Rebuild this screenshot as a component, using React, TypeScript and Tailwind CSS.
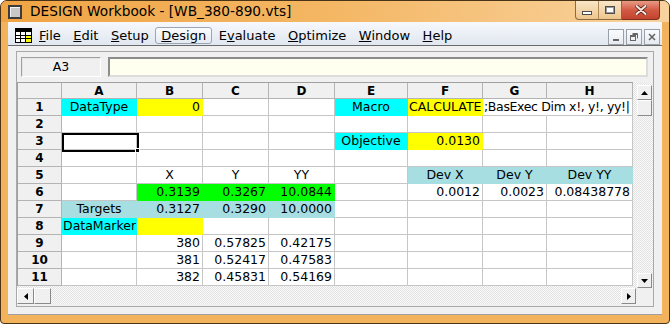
import React from "react";

type Tone = "cyan" | "yel" | "grn" | "teal";
type Cell = { t?: string; bg?: Tone; a?: "l" | "c" | "r"; open?: boolean };

const TONE: Record<Tone, string> = {
  cyan: "bg-[#00ffff] border-[#00ffff]",
  yel: "bg-[#ffff00] border-[#ffff00]",
  grn: "bg-[#00ff00] border-[#00ff00]",
  teal: "bg-[#a6dee2] border-[#a6dee2]",
};

const ALIGN = { l: "justify-start pl-[1px]", c: "justify-center", r: "justify-end pr-[2px]" };

const COLS = ["A", "B", "C", "D", "E", "F", "G", "H"];

const e: Cell = {};
const rows: Cell[][] = [
  [
    { t: "DataType", bg: "cyan", a: "c" },
    { t: "0", bg: "yel", a: "r" },
    e,
    e,
    { t: "Macro", bg: "cyan", a: "c" },
    { t: "CALCULATE", bg: "yel", a: "l" },
    { t: ";BasExec Dim x!, y!, yy!|", a: "l", open: true },
    e,
  ],
  [e, e, e, e, e, e, e, e],
  [e, e, e, e, { t: "Objective", bg: "cyan", a: "c" }, { t: "0.0130", bg: "yel", a: "r" }, e, e],
  [e, e, e, e, e, e, e, e],
  [
    e,
    { t: "X", a: "c" },
    { t: "Y", a: "c" },
    { t: "YY", a: "c" },
    e,
    { t: "Dev X", bg: "teal", a: "c" },
    { t: "Dev Y", bg: "teal", a: "c" },
    { t: "Dev YY", bg: "teal", a: "c" },
  ],
  [
    e,
    { t: "0.3139", bg: "grn", a: "r" },
    { t: "0.3267", bg: "grn", a: "r" },
    { t: "10.0844", bg: "grn", a: "r" },
    e,
    { t: "0.0012", a: "r" },
    { t: "0.0023", a: "r" },
    { t: "0.08438778", a: "r" },
  ],
  [
    { t: "Targets", bg: "teal", a: "c" },
    { t: "0.3127", bg: "teal", a: "r" },
    { t: "0.3290", bg: "teal", a: "r" },
    { t: "10.0000", bg: "teal", a: "r" },
    e,
    e,
    e,
    e,
  ],
  [{ t: "DataMarker", bg: "cyan", a: "l" }, { bg: "yel" }, e, e, e, e, e, e],
  [e, { t: "380", a: "r" }, { t: "0.57825", a: "r" }, { t: "0.42175", a: "r" }, e, e, e, e],
  [e, { t: "381", a: "r" }, { t: "0.52417", a: "r" }, { t: "0.47583", a: "r" }, e, e, e, e],
  [e, { t: "382", a: "r" }, { t: "0.45831", a: "r" }, { t: "0.54169", a: "r" }, e, e, e, e],
];

const btn3d = "bg-[#f0f0f0] border border-t-white border-l-white border-b-[#8a8a8a] border-r-[#8a8a8a]";
const hatch =
  "bg-[image:repeating-conic-gradient(#e2e2e2_0%_25%,#fafafa_0%_50%)] bg-[length:2px_2px]";

const Tri = ({ dir }: { dir: "up" | "down" | "left" | "right" }) => {
  const pts = {
    up: "0,4 7,4 3.5,0",
    down: "0,0 7,0 3.5,4",
    left: "4,0 4,7 0,3.5",
    right: "0,0 0,7 4,3.5",
  }[dir];
  const horiz = dir === "up" || dir === "down";
  return (
    <svg width={horiz ? 7 : 4} height={horiz ? 4 : 7} viewBox={horiz ? "0 0 7 4" : "0 0 4 7"}>
      <polygon points={pts} fill="#000" />
    </svg>
  );
};

const SheetIcon = () => (
  <svg width="17" height="15" viewBox="0 0 17 15">
    <rect x="0.5" y="0.5" width="16" height="14" fill="#fff" stroke="#000" />
    <rect x="1" y="1" width="15" height="3" fill="#000" />
    <rect x="11" y="7" width="5" height="7" fill="#ffff00" />
    <path d="M1 7.5H16M1 10.5H16M5.5 4V14M10.5 4V14" stroke="#000" />
  </svg>
);

export default function App() {
  return (
    <div className="w-[670px] h-[324px] overflow-hidden flex flex-col bg-[#f3b25c] border border-[#4a3418] rounded-t-[7px] rounded-b-[4px] font-['DejaVu_Sans',Verdana,sans-serif] text-black">
      {/* title bar */}
      <div className="h-[21px] flex bg-gradient-to-r from-[#f0a444] via-[#f4b764] to-[#f8d39e]">
        <div className="flex items-center pl-[7px] gap-[8px]">
          <div className="w-[14px] h-[14px] border-2 border-[#3c3c3c] bg-[#c8c8c8] shadow-[inset_1px_1px_0_#f4f4f4]" />
          <span className="text-[13.7px] leading-none pt-[1px]">DESIGN Workbook - [WB_380-890.vts]</span>
        </div>
        <div className="ml-auto mr-[9px] flex h-[19px]">
          <div className="flex w-[47px] rounded-bl-[4px] border border-t-0 border-[#8b6a3e] bg-gradient-to-b from-[#f9e6c8] to-[#eec58c] overflow-hidden">
            <div className="w-[23px] flex items-center justify-center border-r border-[#b08a58]">
              <div className="w-[10px] h-[4px] border border-[#4c4c4c] bg-white mt-[5px]" />
            </div>
            <div className="flex-1 flex items-center justify-center">
              <div className="w-[10px] h-[8px] border border-[#4c4c4c] bg-white shadow-[inset_0_0_0_1px_#9a9a9a]" />
            </div>
          </div>
          <div className="w-[38px] rounded-br-[4px] border border-t-0 border-l-0 border-[#7a3020] bg-gradient-to-b from-[#e99a86] via-[#d35a44] to-[#c2432e] flex items-center justify-center">
            <svg width="12" height="10" viewBox="0 0 12 10">
              <path d="M1.5 1 L10.5 9 M10.5 1 L1.5 9" stroke="#5a2014" strokeWidth="3.6" strokeLinecap="round" />
              <path d="M1.5 1 L10.5 9 M10.5 1 L1.5 9" stroke="#f4e6e2" strokeWidth="2" strokeLinecap="round" />
            </svg>
          </div>
        </div>
      </div>

      <div className="flex-1 flex flex-col px-[7px] pb-[8px]">
        {/* menu bar */}
        <div className="h-[24px] flex items-center pt-[4px] pl-[7px] pr-[2px] bg-gradient-to-b from-[#f6f8fc] to-[#e1e7f0] border-b border-[#6a6a6a] text-[13px]">
          <SheetIcon />
          <div className="flex gap-[2.5px] ml-[2px]">
            {[
              ["F", "ile"],
              ["E", "dit"],
              ["S", "etup"],
              ["D", "esign"],
              ["E", "v", "aluate"],
              ["O", "ptimize"],
              ["W", "indow"],
              ["H", "elp"],
            ].map((p, i) => (
              <div
                key={i}
                className={`h-[17px] px-[5px] flex items-center leading-none ${
                  i === 3
                    ? "border border-[#9aa6b8] rounded-[3px] bg-gradient-to-b from-[#fafbfd] to-[#e6ebf2] -mx-[1px]"
                    : ""
                }`}
              >
                {p.length === 3 ? (
                  <span>
                    {p[0]}
                    <u>{p[1]}</u>
                    {p[2]}
                  </span>
                ) : (
                  <span>
                    <u>{p[0]}</u>
                    {p[1]}
                  </span>
                )}
              </div>
            ))}
          </div>
          <div className="ml-auto self-end flex gap-[2px]">
            {["min", "max", "close"].map((k) => (
              <div
                key={k}
                className="w-[16px] h-[16px] border border-[#9aa0aa] bg-gradient-to-b from-[#fbfcfe] to-[#e6eaf0] flex items-center justify-center"
              >
                {k === "min" && <div className="w-[6px] h-[2px] bg-[#666] mt-[6px]" />}
                {k === "max" && (
                  <svg width="8" height="8" viewBox="0 0 8 8">
                    <path d="M2.5 0.5H7.5V5.5M2.5 1.5H7.5" stroke="#666" fill="none" />
                    <rect x="0.5" y="2.5" width="5" height="5" fill="none" stroke="#666" />
                    <path d="M0.5 3.5H5.5" stroke="#666" />
                  </svg>
                )}
                {k === "close" && (
                  <svg width="8" height="8" viewBox="0 0 8 8">
                    <path d="M1 1L7 7M7 1L1 7" stroke="#666" strokeWidth="1.6" />
                  </svg>
                )}
              </div>
            ))}
          </div>
        </div>

        {/* MDI child */}
        <div className="flex-1 flex flex-col bg-[#f0f0f0] pt-[5px] pb-[4px] px-[8px] border-b border-[#a0a0a0]">
          <div className="flex flex-col border border-[#a8a8a8] pt-[5px] pb-[2px] bg-[#f0f0f0]">
            {/* formula bar */}
            <div className="h-[20px] flex gap-[7px] pl-[4px] pr-[5px]">
              <div className="w-[80px] border border-t-[#a0a0a0] border-l-[#a0a0a0] border-b-white border-r-white shadow-[inset_1px_1px_0_#e4e4e4] flex items-center justify-center text-[12.5px]">
                A3
              </div>
              <div className="flex-1 bg-[#fffff0] border-2 border-t-[#8c8c8c] border-l-[#8c8c8c] border-b-[#dcdcdc] border-r-[#dcdcdc]" />
            </div>

            {/* sheet */}
            <div className="mt-[5px] grid grid-cols-[620px_16px] grid-rows-[206px_16px]">
              <div className={`${hatch}`}>
                <div className="relative w-[616px] h-[204px] overflow-hidden bg-white border-t border-l border-[#a0a0a0] grid grid-cols-[44px_75px_66px_66px_66px_73px_75px_64px_86px] grid-rows-[16px_repeat(11,17px)] text-[12.5px] leading-[16px]">
                  <div className="bg-[#f0f0f0] border-r border-b border-[#b4b4b4]" />
                  {COLS.map((c) => (
                    <div
                      key={c}
                      className="bg-[#f0f0f0] border-r border-b border-[#b4b4b4] flex items-center justify-center font-bold text-[12px]"
                    >
                      {c}
                    </div>
                  ))}
                  {rows.map((r, ri) => (
                    <React.Fragment key={ri}>
                      <div className="bg-[#f0f0f0] border-r border-b border-[#b4b4b4] flex items-center justify-center font-bold text-[12px]">
                        {ri + 1}
                      </div>
                      {r.map((c, ci) => (
                        <div
                          key={ci}
                          className={`border-r border-b flex items-center whitespace-nowrap ${
                            c.bg
                              ? TONE[c.bg]
                              : c.open
                              ? "border-b-[#c6c6c6] border-r-transparent"
                              : "border-[#c6c6c6]"
                          } ${c.open ? "overflow-visible tracking-[-0.35px]" : "overflow-hidden"} ${ALIGN[c.a ?? "l"]}`}
                        >
                          {c.t}
                        </div>
                      ))}
                    </React.Fragment>
                  ))}
                  {/* current cell A3 */}
                  <div className="absolute left-[44px] top-[50px] w-[77px] h-[19px] border-2 border-black" />
                  <div className="absolute left-[117px] top-[65px] w-[5px] h-[5px] bg-black border border-white" />
                </div>
              </div>

              {/* vertical scrollbar */}
              <div className={`flex flex-col pt-[3px] pr-[1px] ${hatch}`}>
                <div className={`h-[15px] ${btn3d} flex items-center justify-center`}>
                  <Tri dir="up" />
                </div>
                <div className={`h-[16px] ${btn3d}`} />
                <div className="flex-1" />
                <div className={`h-[15px] ${btn3d} flex items-center justify-center`}>
                  <Tri dir="down" />
                </div>
              </div>

              {/* horizontal scrollbar */}
              <div className={`flex ${hatch}`}>
                <div className={`w-[17px] ${btn3d} flex items-center justify-center`}>
                  <Tri dir="left" />
                </div>
                <div className={`w-[17px] ${btn3d}`} />
                <div className="flex-1" />
                <div className={`w-[15px] mr-[1px] ${btn3d} flex items-center justify-center`}>
                  <Tri dir="right" />
                </div>
              </div>
              <div className="bg-[#f0f0f0]" />
            </div>
          </div>
        </div>
      </div>
    </div>
  );
}
